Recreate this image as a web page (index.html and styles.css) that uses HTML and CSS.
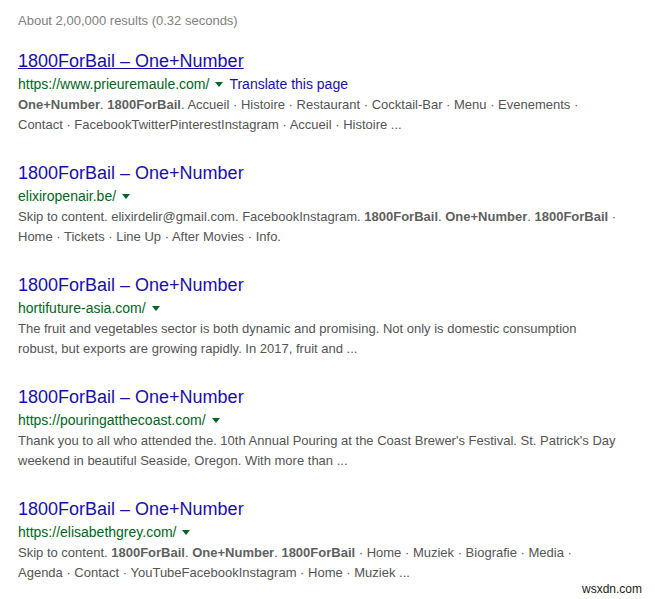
FILE: index.html
```html
<!DOCTYPE html>
<html>
<head>
<meta charset="utf-8">
<link rel="stylesheet" href="styles.css">
</head>
<body>
<div class="page">
  <div class="stats">About 2,00,000 results (0.32 seconds)</div>

  <div class="result">
    <a class="title visited">1800ForBail – One+Number</a>
    <div class="url"><cite>https://www.prieuremaule.com/</cite><span class="arrow"></span><a class="translate">Translate this page</a></div>
    <div class="snippet"><b>One+Number</b>. <b>1800ForBail</b>. Accueil · Histoire · Restaurant · Cocktail-Bar · Menu · Evenements · Contact · FacebookTwitterPinterestInstagram · Accueil · Histoire ...</div>
  </div>

  <div class="result">
    <a class="title">1800ForBail – One+Number</a>
    <div class="url"><cite>elixiropenair.be/</cite><span class="arrow"></span></div>
    <div class="snippet">Skip to content. elixirdelir@gmail.com. FacebookInstagram. <b>1800ForBail</b>. <b>One+Number</b>. <b>1800ForBail</b> · Home · Tickets · Line Up · After Movies · Info.</div>
  </div>

  <div class="result">
    <a class="title">1800ForBail – One+Number</a>
    <div class="url"><cite>hortifuture-asia.com/</cite><span class="arrow"></span></div>
    <div class="snippet">The fruit and vegetables sector is both dynamic and promising. Not only is domestic consumption robust, but exports are growing rapidly. In 2017, fruit and ...</div>
  </div>

  <div class="result">
    <a class="title">1800ForBail – One+Number</a>
    <div class="url"><cite>https://pouringatthecoast.com/</cite><span class="arrow"></span></div>
    <div class="snippet">Thank you to all who attended the. 10th Annual Pouring at the Coast Brewer's Festival. St. Patrick's Day weekend in beautiful Seaside, Oregon. With more than ...</div>
  </div>

  <div class="result">
    <a class="title">1800ForBail – One+Number</a>
    <div class="url"><cite>https://elisabethgrey.com/</cite><span class="arrow"></span></div>
    <div class="snippet">Skip to content. <b>1800ForBail</b>. <b>One+Number</b>. <b>1800ForBail</b> · Home · Muziek · Biografie · Media · Agenda · Contact · YouTubeFacebookInstagram · Home · Muziek ...</div>
  </div>
</div>
<div class="watermark">wsxdn.com</div>
</body>
</html>
```
FILE: styles.css
```css
html, body {
  margin: 0;
  padding: 0;
  background: #ffffff;
}
body {
  font-family: "Liberation Sans", Arial, sans-serif;
  width: 655px;
  height: 599px;
  position: relative;
  overflow: hidden;
}
.page {
  padding: 11px 0 0 18px;
  width: 599px;
}
.stats {
  font-size: 13px;
  line-height: 20px;
  color: #808080;
  margin-bottom: 18px;
}
.result {
  margin-bottom: 26px;
}
.title {
  display: block;
  font-size: 18px;
  line-height: 24px;
  color: #1a0dab;
  text-decoration: none;
  cursor: pointer;
}
.title.visited {
  text-decoration: underline;
}
.url {
  display: flex;
  align-items: center;
  font-size: 14px;
  line-height: 22px;
  height: 22px;
}
.url cite {
  font-style: normal;
  color: #006621;
}
.arrow {
  display: inline-block;
  width: 0;
  height: 0;
  border-left: 4px solid transparent;
  border-right: 4px solid transparent;
  border-top: 5px solid #006621;
  margin: 1px 6px 0 6px;
}
.translate {
  color: #1a0dab;
}
.snippet {
  font-size: 13px;
  line-height: 20px;
  color: #545454;
}
.snippet b {
  color: #5f5f5f;
  font-weight: bold;
}
.watermark {
  position: absolute;
  left: 582px;
  top: 581px;
  font-size: 12px;
  line-height: 16px;
  color: #222222;
}
```
